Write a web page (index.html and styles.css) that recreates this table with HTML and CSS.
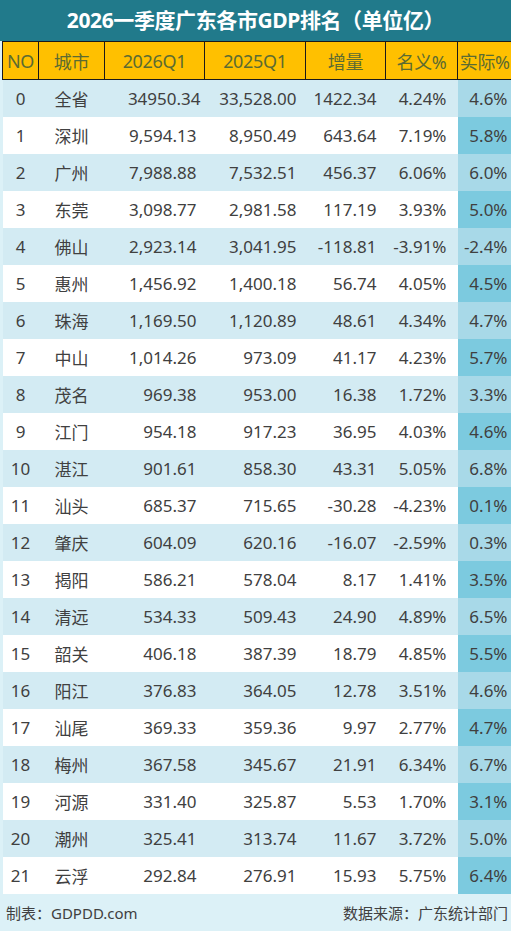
FILE: index.html
```html
<!DOCTYPE html>
<html lang="zh-CN">
<head>
    <meta charset="UTF-8">
    <meta name="viewport" content="width=device-width, initial-scale=1.0">
    <title>2026一季度广东各市GDP排名</title>
    <link rel="stylesheet" href="styles.css">
</head>
<body>
    <div class="sheet">
        <div class="title">2026一季度广东各市GDP排名（单位亿）</div>
        <table class="rank">
            <colgroup>
                <col class="c-no"><col class="c-city"><col class="c-a"><col class="c-b"><col class="c-inc"><col class="c-nom"><col class="c-real">
            </colgroup>
            <thead>
                <tr>
                    <th>NO</th><th>城市</th><th>2026Q1</th><th>2025Q1</th><th>增量</th><th>名义%</th><th>实际%</th>
                </tr>
            </thead>
            <tbody>
                <tr><td>0</td><td>全省</td><td class="n first">34950.34</td><td class="n">33,528.00</td><td class="n">1422.34</td><td class="n">4.24%</td><td class="real">4.6%</td></tr>
                <tr><td>1</td><td>深圳</td><td class="n">9,594.13</td><td class="n">8,950.49</td><td class="n">643.64</td><td class="n">7.19%</td><td class="real">5.8%</td></tr>
                <tr><td>2</td><td>广州</td><td class="n">7,988.88</td><td class="n">7,532.51</td><td class="n">456.37</td><td class="n">6.06%</td><td class="real">6.0%</td></tr>
                <tr><td>3</td><td>东莞</td><td class="n">3,098.77</td><td class="n">2,981.58</td><td class="n">117.19</td><td class="n">3.93%</td><td class="real">5.0%</td></tr>
                <tr><td>4</td><td>佛山</td><td class="n">2,923.14</td><td class="n">3,041.95</td><td class="n">-118.81</td><td class="n">-3.91%</td><td class="real">-2.4%</td></tr>
                <tr><td>5</td><td>惠州</td><td class="n">1,456.92</td><td class="n">1,400.18</td><td class="n">56.74</td><td class="n">4.05%</td><td class="real">4.5%</td></tr>
                <tr><td>6</td><td>珠海</td><td class="n">1,169.50</td><td class="n">1,120.89</td><td class="n">48.61</td><td class="n">4.34%</td><td class="real">4.7%</td></tr>
                <tr><td>7</td><td>中山</td><td class="n">1,014.26</td><td class="n">973.09</td><td class="n">41.17</td><td class="n">4.23%</td><td class="real">5.7%</td></tr>
                <tr><td>8</td><td>茂名</td><td class="n">969.38</td><td class="n">953.00</td><td class="n">16.38</td><td class="n">1.72%</td><td class="real">3.3%</td></tr>
                <tr><td>9</td><td>江门</td><td class="n">954.18</td><td class="n">917.23</td><td class="n">36.95</td><td class="n">4.03%</td><td class="real">4.6%</td></tr>
                <tr><td>10</td><td>湛江</td><td class="n">901.61</td><td class="n">858.30</td><td class="n">43.31</td><td class="n">5.05%</td><td class="real">6.8%</td></tr>
                <tr><td>11</td><td>汕头</td><td class="n">685.37</td><td class="n">715.65</td><td class="n">-30.28</td><td class="n">-4.23%</td><td class="real">0.1%</td></tr>
                <tr><td>12</td><td>肇庆</td><td class="n">604.09</td><td class="n">620.16</td><td class="n">-16.07</td><td class="n">-2.59%</td><td class="real">0.3%</td></tr>
                <tr><td>13</td><td>揭阳</td><td class="n">586.21</td><td class="n">578.04</td><td class="n">8.17</td><td class="n">1.41%</td><td class="real">3.5%</td></tr>
                <tr><td>14</td><td>清远</td><td class="n">534.33</td><td class="n">509.43</td><td class="n">24.90</td><td class="n">4.89%</td><td class="real">6.5%</td></tr>
                <tr><td>15</td><td>韶关</td><td class="n">406.18</td><td class="n">387.39</td><td class="n">18.79</td><td class="n">4.85%</td><td class="real">5.5%</td></tr>
                <tr><td>16</td><td>阳江</td><td class="n">376.83</td><td class="n">364.05</td><td class="n">12.78</td><td class="n">3.51%</td><td class="real">4.6%</td></tr>
                <tr><td>17</td><td>汕尾</td><td class="n">369.33</td><td class="n">359.36</td><td class="n">9.97</td><td class="n">2.77%</td><td class="real">4.7%</td></tr>
                <tr><td>18</td><td>梅州</td><td class="n">367.58</td><td class="n">345.67</td><td class="n">21.91</td><td class="n">6.34%</td><td class="real">6.7%</td></tr>
                <tr><td>19</td><td>河源</td><td class="n">331.40</td><td class="n">325.87</td><td class="n">5.53</td><td class="n">1.70%</td><td class="real">3.1%</td></tr>
                <tr><td>20</td><td>潮州</td><td class="n">325.41</td><td class="n">313.74</td><td class="n">11.67</td><td class="n">3.72%</td><td class="real">5.0%</td></tr>
                <tr><td>21</td><td>云浮</td><td class="n">292.84</td><td class="n">276.91</td><td class="n">15.93</td><td class="n">5.75%</td><td class="real">6.4%</td></tr>
            </tbody>
        </table>
        <div class="footer">
            <span>制表：GDPDD.com</span>
            <span>数据来源：广东统计部门</span>
        </div>
    </div>
</body>
</html>
```

FILE: styles.css
```css
body {
    margin: 0;
    font-family: "Noto Sans", "Noto Sans CJK SC", sans-serif;
    color: #404040;
    background: #dcf1f7;
}
.sheet {
    width: 511px;
    height: 931px;
    overflow: hidden;
    background: #dcf1f7;
}
.title {
    height: 41px;
    line-height: 40px;
    background: #217a8b;
    color: #fff;
    font-size: 21px;
    font-weight: bold;
    text-align: center;
    letter-spacing: -0.4px;
}
.rank {
    border-collapse: collapse;
    table-layout: fixed;
    width: 509px;
    margin-left: 2px;
    font-size: 17px;
}
.c-no { width: 36px; }
.c-city { width: 66px; }
.c-a { width: 100px; }
.c-b { width: 101px; }
.c-inc { width: 80px; }
.c-nom { width: 72px; }
.c-real { width: 54px; }
.rank th {
    height: 37px;
    padding: 0;
    background: #ffc000;
    border: 1px solid #1a1a1a;
    color: #5b6b32;
    font-weight: normal;
    font-size: 18px;
    white-space: nowrap;
    letter-spacing: -0.3px;
}
.rank th:last-child {
    border-right: none;
}
.rank td {
    height: 37px;
    padding: 0;
    text-align: center;
    white-space: nowrap;
}
.rank td.n {
    text-align: right;
    padding-right: 9px;
}
.rank td:nth-child(3) {
    padding-right: 8px;
}
.rank td.first {
    padding-right: 4px;
}
.rank td:nth-child(6) {
    padding-right: 11px;
}
.rank td.real {
    text-align: right;
    padding-right: 4px;
}
.rank tbody tr:nth-child(odd) {
    background: #d3ebf3;
}
.rank tbody tr:nth-child(even) {
    background: #fff;
}
.rank tbody tr:nth-child(odd) td.real {
    background: #a8d9e8;
}
.rank tbody tr:nth-child(even) td.real {
    background: #7ccadf;
}
.footer {
    display: flex;
    justify-content: space-between;
    align-items: center;
    height: 37px;
    padding: 0 3px 0 6px;
    font-size: 15px;
}
```
